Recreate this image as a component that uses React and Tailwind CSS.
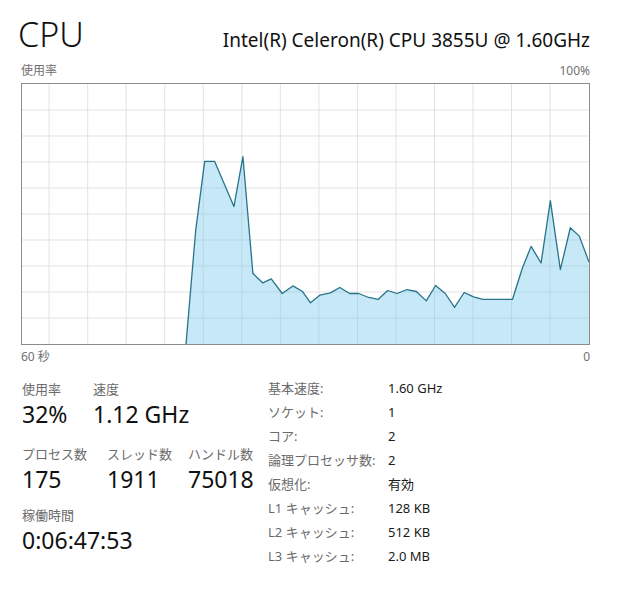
import React from "react";

const points = [
    [164.3, 261], [174, 147], [183, 77.7], [193, 77.7], [212.3, 123], [221.3, 73],
    [231.3, 190.3], [241.3, 199.7], [249.7, 195.7], [260.7, 210.3], [271.3, 202.7],
    [280.7, 208], [289, 219.7], [298.3, 212], [309, 209.7], [318.3, 204.3],
    [328.3, 210.3], [337.3, 210.3], [347.3, 214.3], [356.7, 216.3], [366.3, 207.3],
    [375.7, 210.3], [385.7, 206.3], [395, 208.3], [405, 217.7], [414.3, 202.3],
    [424, 210.3], [433.3, 224.3], [443, 209.3], [452.3, 213.7], [461.7, 216.3],
    [491.3, 216.3], [501.3, 184.7], [510, 163], [520, 179.7], [529.3, 117],
    [539.3, 186.3], [549.3, 144.3], [558.3, 152.7], [568, 178.7],
];

const specs = [
    ["基本速度:", "1.60 GHz"],
    ["ソケット:", "1"],
    ["コア:", "2"],
    ["論理プロセッサ数:", "2"],
    ["仮想化:", "有効"],
    ["L1 キャッシュ:", "128 KB"],
    ["L2 キャッシュ:", "512 KB"],
    ["L3 キャッシュ:", "2.0 MB"],
];

function Graph() {
    const vLines = [];
    for (let k = 1; k <= 14; k++) vLines.push(567.6 - 38.6 * k);
    const hLines = [];
    for (let k = 1; k <= 9; k++) hLines.push(26.1 * k);
    const line = points.map((p) => p.join(",")).join(" ");
    const area = line + " 568,261 164.3,261";

    return (
        <svg viewBox="0 0 568 261" preserveAspectRatio="none" className="block w-full h-full">
            {vLines.map((x) => (
                <line key={"v" + x} x1={x} y1="0" x2={x} y2="261" stroke="#e2e2e2" strokeWidth="1" />
            ))}
            {hLines.map((y) => (
                <line key={"h" + y} x1="0" y1={y} x2="568" y2={y} stroke="#e2e2e2" strokeWidth="1" />
            ))}
            <polygon points={area} fill="rgba(120,200,235,0.42)" />
            <polyline points={line} fill="none" stroke="#26748a" strokeWidth="1.3" strokeLinejoin="round" />
        </svg>
    );
}

function Stat({ label, value, className = "" }) {
    return (
        <div className={className}>
            <div className="text-[13px] leading-[16px] text-[#6b6b6b]">{label}</div>
            <div className="mt-[3px] text-[23px] leading-[28px] text-[#111]">{value}</div>
        </div>
    );
}

export default function App() {
    return (
        <div className="w-[620px] h-[592px] bg-white overflow-hidden font-['Noto_Sans','Noto_Sans_CJK_JP',sans-serif]">
            <div className="pl-[21px] pr-[30px]">
                <div className="flex items-baseline justify-between pt-[17px]">
                    <span className="-ml-[3px] text-[34px] leading-none font-light text-[#111]">CPU</span>
                    <span className="text-[19px] leading-none text-[#111]">Intel(R) Celeron(R) CPU 3855U @ 1.60GHz</span>
                </div>

                <div className="mt-[14px] flex justify-between text-[12px] leading-[12px] text-[#707070]">
                    <span>使用率</span>
                    <span>100%</span>
                </div>

                <div className="mt-[6px] h-[262px] border border-[#8c8c8c]">
                    <Graph />
                </div>

                <div className="mt-[6px] flex justify-between text-[12px] leading-[12px] text-[#707070]">
                    <span>60 秒</span>
                    <span>0</span>
                </div>

                <div className="mt-[13px] grid grid-cols-[247px_1fr]">
                    <div className="pl-[1px] pt-[5px]">
                        <div className="flex">
                            <Stat label="使用率" value="32%" className="w-[71px]" />
                            <Stat label="速度" value="1.12 GHz" />
                        </div>
                        <div className="mt-[18px] flex">
                            <Stat label="プロセス数" value="175" className="w-[85px]" />
                            <Stat label="スレッド数" value="1911" className="w-[81px]" />
                            <Stat label="ハンドル数" value="75018" />
                        </div>
                        <Stat label="稼働時間" value="0:06:47:53" className="mt-[14px]" />
                    </div>

                    <div className="text-[13px] leading-[24px]">
                        {specs.map(([label, value]) => (
                            <div key={label} className="grid grid-cols-[120px_1fr]">
                                <span className="text-[#6b6b6b]">{label}</span>
                                <span className="text-[#1a1a1a]">{value}</span>
                            </div>
                        ))}
                    </div>
                </div>
            </div>
        </div>
    );
}
